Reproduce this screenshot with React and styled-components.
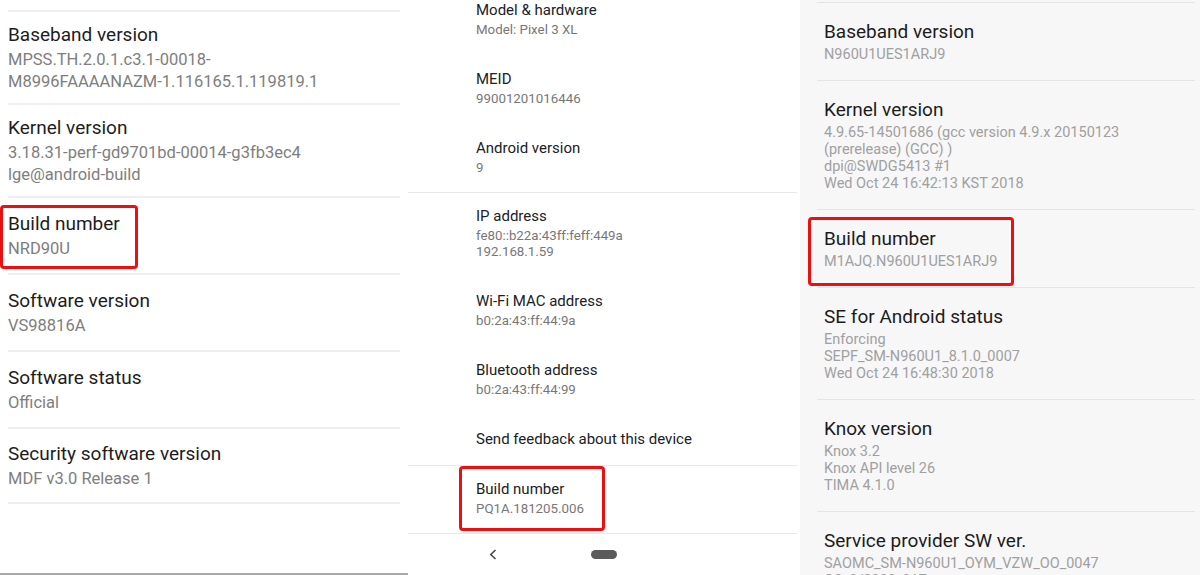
import React from 'react';
import styled, { createGlobalStyle } from 'styled-components';

const GlobalStyle = createGlobalStyle`
  html, body {
    margin: 0;
    padding: 0;
    background: #ffffff;
  }
  * {
    box-sizing: border-box;
  }
`;

const skins = {
  lg: {
    titleSize: 19, titleLine: 26, titleColor: '#1d1d1d',
    valueSize: 16.5, valueLine: 22, valueColor: '#7e7e7e', gap: 1,
  },
  pixel: {
    titleSize: 15, titleLine: 19, titleColor: '#202124',
    valueSize: 13.3, valueLine: 16, valueColor: '#777777', gap: 2,
  },
  samsung: {
    titleSize: 19, titleLine: 24, titleColor: '#1c1c1c',
    valueSize: 14.5, valueLine: 17, valueColor: '#a0a0a0', gap: 2,
  },
};

const Screen = styled.div`
  display: flex;
  width: 1200px;
  height: 575px;
  overflow: hidden;
  font-family: Roboto, "Noto Sans", "Liberation Sans", sans-serif;
`;

const Panel = styled.section`
  flex: none;
  width: ${props => props.$width}px;
  height: 575px;
  overflow: hidden;
  background: ${props => props.$bg};
  display: flex;
  flex-direction: column;
`;

const TextBlock = styled.div`
  position: relative;
  display: flex;
  flex-direction: column;
  align-items: flex-start;
`;

const Title = styled.div`
  font-size: ${props => skins[props.$skin].titleSize}px;
  line-height: ${props => skins[props.$skin].titleLine}px;
  color: ${props => skins[props.$skin].titleColor};
  white-space: nowrap;
`;

const Values = styled.div`
  margin-top: ${props => skins[props.$skin].gap}px;
`;

const Value = styled.div`
  font-size: ${props => skins[props.$skin].valueSize}px;
  line-height: ${props => skins[props.$skin].valueLine}px;
  color: ${props => skins[props.$skin].valueColor};
  white-space: nowrap;
`;

const Highlight = styled.div`
  position: absolute;
  top: ${props => props.$top}px;
  left: ${props => props.$left}px;
  width: ${props => props.$w}px;
  height: ${props => props.$h}px;
  border: 3px solid #ec0f12;
  border-radius: 4px;
  pointer-events: none;
`;

/* LG */
const LgList = styled.div`
  flex: 1;
  padding-top: 10px;
  border-bottom: 2px solid #a9a9a9;
`;

const LgRow = styled.div`
  margin: 0 8px;
  min-height: 77px;
  padding: 10px 0;
  border-top: 2px solid #efefef;
  display: flex;
  flex-direction: column;
  justify-content: center;

  &:last-child {
    border-bottom: 2px solid #efefef;
  }
`;

/* Pixel */
const PixelList = styled.div`
  margin-top: -15px;
`;

const PixelRow = styled.div`
  margin-right: 3px;
  padding: ${props => (props.$divider ? '14px' : '16px')} 0 16px 68px;
  border-top: ${props => (props.$divider ? '1px solid #e8e8e8' : 'none')};
`;

const NavBar = styled.nav`
  flex: 1;
  display: flex;
  align-items: center;
  gap: 94px;
  padding-left: 81px;
  border-top: 1px solid #e8e8e8;
  margin-right: 3px;
`;

const HomePill = styled.div`
  width: 26px;
  height: 9px;
  border-radius: 5px;
  background: #5b5b5b;
`;

/* Samsung */
const SamsungList = styled.div`
  padding-top: 2px;
`;

const SamsungRow = styled.div`
  margin: 0 5px 0 17px;
  padding: 17px 0 17px 7px;
  border-top: 1px solid #e4e4e4;
`;

const lgItems = [
  { title: 'Baseband version', values: ['MPSS.TH.2.0.1.c3.1-00018-', 'M8996FAAAANAZM-1.116165.1.119819.1'] },
  { title: 'Kernel version', values: ['3.18.31-perf-gd9701bd-00014-g3fb3ec4', 'lge@android-build'] },
  { title: 'Build number', values: ['NRD90U'], box: { top: -6, left: -8, w: 138, h: 64 } },
  { title: 'Software version', values: ['VS98816A'] },
  { title: 'Software status', values: ['Official'] },
  { title: 'Security software version', values: ['MDF v3.0 Release 1'] },
];

const pixelItems = [
  { title: 'Model & hardware', values: ['Model: Pixel 3 XL'] },
  { title: 'MEID', values: ['99001201016446'] },
  { title: 'Android version', values: ['9'] },
  { title: 'IP address', values: ['fe80::b22a:43ff:feff:449a', '192.168.1.59'], divider: true },
  { title: 'Wi-Fi MAC address', values: ['b0:2a:43:ff:44:9a'] },
  { title: 'Bluetooth address', values: ['b0:2a:43:ff:44:99'] },
  { title: 'Send feedback about this device', values: [] },
  { title: 'Build number', values: ['PQ1A.181205.006'], divider: true, box: { top: -14, left: -17, w: 146, h: 65 } },
];

const samsungItems = [
  { title: 'Baseband version', values: ['N960U1UES1ARJ9'] },
  {
    title: 'Kernel version',
    values: ['4.9.65-14501686 (gcc version 4.9.x 20150123', '(prerelease) (GCC) )', 'dpi@SWDG5413 #1', 'Wed Oct 24 16:42:13 KST 2018'],
  },
  { title: 'Build number', values: ['M1AJQ.N960U1UES1ARJ9'], box: { top: -10, left: -16, w: 206, h: 69 } },
  { title: 'SE for Android status', values: ['Enforcing', 'SEPF_SM-N960U1_8.1.0_0007', 'Wed Oct 24 16:48:30 2018'] },
  { title: 'Knox version', values: ['Knox 3.2', 'Knox API level 26', 'TIMA 4.1.0'] },
  { title: 'Service provider SW ver.', values: ['SAOMC_SM-N960U1_OYM_VZW_OO_0047', 'OS_0/2020_017'] },
];

const Entry = ({ skin, item }) => (
  <TextBlock>
    <Title $skin={skin}>{item.title}</Title>
    {item.values.length > 0 && (
      <Values $skin={skin}>
        {item.values.map(v => (
          <Value key={v} $skin={skin}>{v}</Value>
        ))}
      </Values>
    )}
    {item.box && (
      <Highlight $top={item.box.top} $left={item.box.left} $w={item.box.w} $h={item.box.h} />
    )}
  </TextBlock>
);

const BackChevron = () => (
  <svg width="8" height="11" viewBox="0 0 8 11">
    <polyline points="6.5,1 1.8,5.5 6.5,10" fill="none" stroke="#4a4a4a" strokeWidth="1.6" />
  </svg>
);

const App = () => (
  <>
    <GlobalStyle />
    <Screen>
      <Panel $width={408} $bg="#ffffff">
        <LgList>
          {lgItems.map(item => (
            <LgRow key={item.title}>
              <Entry skin="lg" item={item} />
            </LgRow>
          ))}
        </LgList>
      </Panel>

      <Panel $width={392} $bg="#ffffff">
        <PixelList>
          {pixelItems.map(item => (
            <PixelRow key={item.title} $divider={item.divider}>
              <Entry skin="pixel" item={item} />
            </PixelRow>
          ))}
        </PixelList>
        <NavBar>
          <BackChevron />
          <HomePill />
        </NavBar>
      </Panel>

      <Panel $width={400} $bg="#f7f7f7">
        <SamsungList>
          {samsungItems.map(item => (
            <SamsungRow key={item.title}>
              <Entry skin="samsung" item={item} />
            </SamsungRow>
          ))}
        </SamsungList>
      </Panel>
    </Screen>
  </>
);

export default App;
